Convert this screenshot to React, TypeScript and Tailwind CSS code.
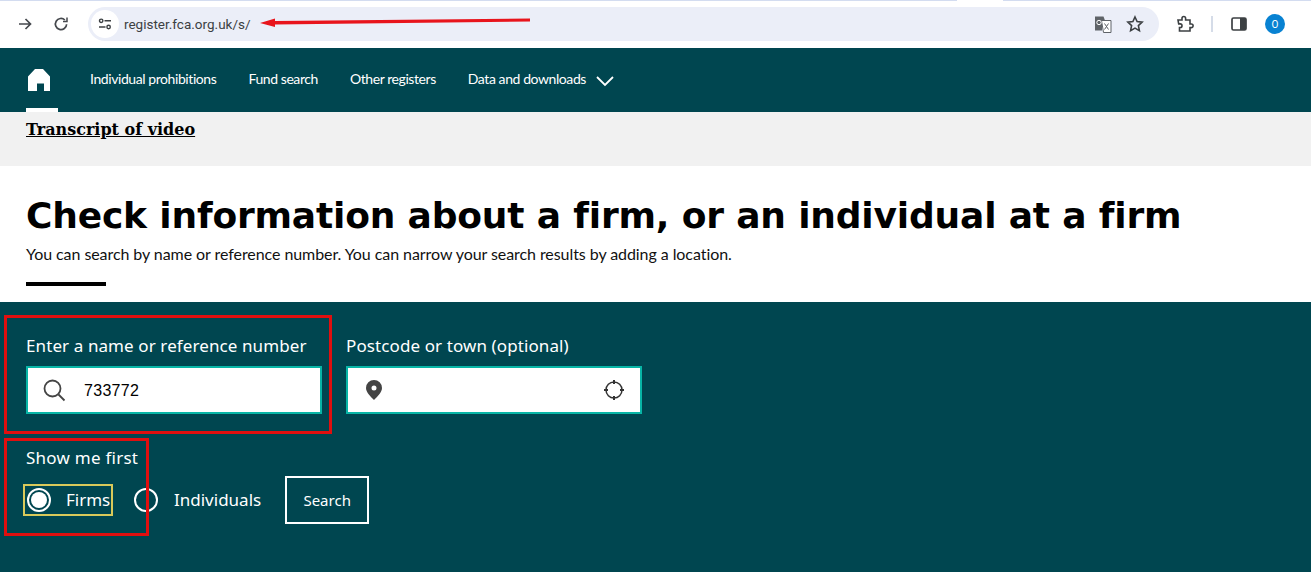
import React from "react";

const teal = "bg-[#004650]";

function ChromeBar() {
  return (
    <div className="h-[48px] bg-white flex flex-col shrink-0">
      <div className="h-[1px] bg-[#d3dcf0] flex shrink-0 mb-[6px]">
        <div className="w-[46px] h-[1px] bg-white ml-[957px]" />
      </div>
      <div className="h-[34px] flex items-center pl-[17px]">
        <svg width="16" height="16" viewBox="0 0 16 16" fill="none" stroke="#45484d" strokeWidth="1.7" className="mr-[20px] shrink-0">
          <path d="M2 8h11.5M8.5 3l5 5-5 5" />
        </svg>
        <svg width="16" height="16" viewBox="0 0 16 16" fill="none" stroke="#45484d" strokeWidth="1.7" className="mr-[19px] shrink-0">
          <path d="M13.6 8.2a5.6 5.6 0 1 1-1.7-4.2" />
          <path d="M14 1.5v4h-4" strokeWidth="1.5" />
        </svg>
        <div className="w-[1071px] h-[34px] rounded-full bg-[#ebeef8] flex items-center pl-[3px] pr-[15px] shrink-0">
          <div className="w-[28px] h-[28px] rounded-full bg-white flex items-center justify-center shrink-0">
            <svg width="14" height="12" viewBox="0 0 14 12" fill="none" stroke="#3c4043" strokeWidth="1.4">
              <circle cx="3.2" cy="2.8" r="1.7" />
              <path d="M6.5 2.8h6.5M1 9h6.5" />
              <circle cx="10.6" cy="9" r="1.7" />
            </svg>
          </div>
          <span className="ml-[5px] text-[13.5px] text-[#3c4043] font-['Roboto',sans-serif]">register.fca.org.uk/s/</span>
          <div className="ml-auto flex items-center gap-[14px]">
            <svg width="18" height="18" viewBox="0 0 18 18">
              <path d="M1 1.5h8.5l1.5 4h-3v10H1z" fill="#5f6368" />
              <path d="M7.5 5.5H17v12H9.5z" fill="#fff" stroke="#5f6368" strokeWidth="1" />
              <circle cx="5" cy="7.5" r="2.2" fill="none" stroke="#fff" strokeWidth="1" />
              <path d="M10.5 8.5l4 6M14.5 8.5l-4 6" stroke="#5f6368" strokeWidth="1" />
            </svg>
            <svg width="18" height="18" viewBox="0 0 18 18" fill="none" stroke="#3c4043" strokeWidth="1.6">
              <path d="M9 2l2.1 4.6 5 .6-3.7 3.4 1 5L9 13.1l-4.400 2.500 1-5L1.900 7.200l5-.6z" />
            </svg>
          </div>
        </div>
        <svg width="18" height="18" viewBox="0 0 18 18" fill="none" stroke="#3c4043" strokeWidth="1.6" className="ml-[17px] shrink-0">
          <path d="M2 5h4V3.300a1.800 1.800 0 0 1 3.600 0V5h4.400v4h1.300a1.800 1.800 0 0 1 0 3.600H14V16H3.500v-3.500h.7a1.800 1.800 0 0 0 0-3.600H2.700z" />
        </svg>
        <div className="w-[2px] h-[16px] bg-[#d5dce8] ml-[17px] shrink-0" />
        <svg width="16" height="14" viewBox="0 0 16 14" className="ml-[18px] shrink-0">
          <rect x="1" y="1" width="14" height="12" rx="1.500" fill="none" stroke="#3c4043" strokeWidth="1.700" />
          <rect x="9" y="1" width="6" height="12" fill="#3c4043" />
        </svg>
        <div className="w-[20px] h-[20px] rounded-full bg-[#0882d2] text-white text-[10px] flex items-center justify-center ml-[18px] shrink-0 font-['Roboto',sans-serif]">
          O
        </div>
      </div>
    </div>
  );
}

function Nav() {
  return (
    <div className={`h-[64px] ${teal} flex items-stretch pl-[26px] shrink-0 font-['Lato',sans-serif] text-white text-[14px] tracking-[-0.42px]`}>
      <div className="w-[32px] flex flex-col justify-end mr-[32px]">
        <svg width="22" height="22" viewBox="0 0 22 22" className="mb-[17px] ml-[2px]">
          <path d="M7 0h8l7 7.500V22H16V14.500H9V22H0V7.500z" fill="#fff" />
        </svg>
        <div className="h-[4px] w-[32px] bg-white" />
      </div>
      <div className="flex items-center gap-[32px] pb-[3px]">
        <span>Individual prohibitions</span>
        <span>Fund search</span>
        <span>Other registers</span>
        <span className="flex items-center gap-[9px]">
          Data and downloads
          <svg width="20" height="12" viewBox="0 0 20 12" fill="none" stroke="#fff" strokeWidth="1.800" className="mt-[4px]">
            <path d="M2 2l8 8 8-8" />
          </svg>
        </span>
      </div>
    </div>
  );
}

function Field({ label, children }: { label: string; children: React.ReactNode }) {
  return (
    <div className="flex flex-col w-[296px]">
      <label className="text-[17px] leading-[20px] text-white mb-[10px] tracking-[0.1px] whitespace-nowrap">{label}</label>
      <div className="h-[48px] bg-white border-2 border-[#08b5a6] flex items-center">{children}</div>
    </div>
  );
}

function Radio({ checked }: { checked?: boolean }) {
  return (
    <span className="w-[24px] h-[24px] rounded-full border-2 border-white flex items-center justify-center shrink-0">
      {checked && <span className="w-[16px] h-[16px] rounded-full bg-white" />}
    </span>
  );
}

export default function App() {
  return (
    <div className="relative w-[1311px] h-[586px] bg-white overflow-hidden flex flex-col">
      <ChromeBar />
      <Nav />
      <div className="h-[54px] bg-[#f1f1f1] pl-[26px] shrink-0">
        <a className="font-['DejaVu_Serif',serif] font-bold text-[16px] leading-[36px] text-black underline block">Transcript of video</a>
      </div>
      <div className="h-[136px] pl-[26px] pt-[28px] shrink-0">
        <h1 className="font-['DejaVu_Sans',sans-serif] font-bold text-[36px] leading-[44px] tracking-[-0.17px] text-black whitespace-nowrap [font-variant-ligatures:none]">
          Check information about a firm, or an individual at a firm
        </h1>
        <p className="font-['Lato',sans-serif] text-[16px] leading-[20px] text-[#111] mt-[6px] tracking-[-0.07px]">
          You can search by name or reference number. You can narrow your search results by adding a location.
        </p>
        <div className="w-[80px] h-[4px] bg-black mt-[18px]" />
      </div>
      <div className={`h-[270px] ${teal} pl-[26px] pt-[34px] font-['Noto_Sans',sans-serif] shrink-0`}>
        <div className="flex gap-[24px]">
          <Field label="Enter a name or reference number">
            <svg width="24" height="24" viewBox="0 0 24 24" fill="none" stroke="#444" strokeWidth="1.800" className="ml-[14px] shrink-0">
              <circle cx="10.500" cy="10.500" r="8" />
              <path d="M16.500 16.500l6 6" />
            </svg>
            <span className="ml-[18px] mt-[2px] text-[16px] text-black font-['Liberation_Sans',sans-serif] tracking-[0.3px]">733772</span>
          </Field>
          <Field label="Postcode or town (optional)">
            <svg width="16" height="20" viewBox="0 0 16 20" className="ml-[18px] shrink-0 mb-[1px]">
              <path fillRule="evenodd" d="M8 0a8 8 0 0 1 8 8c0 4.500-5 9-8 12-3-3-8-7.500-8-12a8 8 0 0 1 8-8zm0 5.500a2.500 2.500 0 1 0 0 5 2.500 2.500 0 0 0 0-5z" fill="#444" />
            </svg>
            <svg width="22" height="22" viewBox="0 0 22 22" fill="none" stroke="#333" strokeWidth="1.500" className="ml-auto mr-[15px] shrink-0">
              <circle cx="11" cy="11" r="8" />
              <path d="M11 1v4M11 17v4M1 11h4M17 11h4" strokeWidth="2" />
            </svg>
          </Field>
        </div>
        <p className="text-[17px] leading-[20px] text-white mt-[34px] tracking-[0.25px]">Show me first</p>
        <div className="flex items-center mt-[8px]">
          <div className="flex items-center h-[32px] -ml-[3px] pl-[2px] w-[90px] border-2 border-[#d9c95a] text-white text-[17px]">
            <Radio checked />
            <span className="ml-[15px]">Firms</span>
          </div>
          <div className="flex items-center ml-[21px] text-white text-[17px]">
            <Radio />
            <span className="ml-[16px]">Individuals</span>
          </div>
          <div className="ml-[24px] w-[84px] h-[48px] border-2 border-white text-white text-[15px] flex items-center justify-center">Search</div>
        </div>
      </div>

      {/* red annotations lying over the screenshot */}
      <div className="absolute left-[4px] top-[315px] w-[328px] h-[119px] border-[3px] border-[#e00f0f]" />
      <div className="absolute left-[4px] top-[438px] w-[145px] h-[98px] border-[3px] border-[#e00f0f]" />
      <svg className="absolute left-[255px] top-[12px]" width="280" height="20" viewBox="0 0 280 20">
        <path d="M5 11L20 6.500 20 9 275 6.500 275 9.500 20 12.500 20 15z" fill="#e8141c" />
      </svg>
    </div>
  );
}
